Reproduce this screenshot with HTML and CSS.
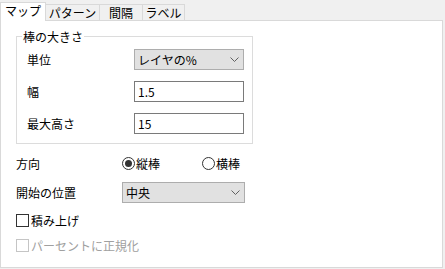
FILE: index.html
```html
<!DOCTYPE html>
<html lang="ja">
<head>
    <meta charset="UTF-8">
    <meta name="viewport" content="width=device-width, initial-scale=1.0">
    <title>マップ</title>
    <link rel="stylesheet" href="styles.css">
</head>
<body>

<div class="window">
    <div class="tabs">
        <div class="tab active tab-map">マップ</div>
        <div class="tab tab-pattern">パターン</div>
        <div class="tab tab-gap">間隔</div>
        <div class="tab tab-label">ラベル</div>
    </div>

    <div class="panel">
        <fieldset class="group">
            <legend>棒の大きさ</legend>
            <div class="group-grid">
                <span class="field-label">単位</span>
                <div class="combo">
                    <span>レイヤの%</span>
                    <svg class="chevron" width="9" height="5" viewBox="0 0 9 5"><path d="M0.5 0.5 L4.5 4.5 L8.5 0.5" fill="none" stroke="#606060"/></svg>
                </div>

                <span class="field-label">幅</span>
                <div class="textbox">1.5</div>

                <span class="field-label">最大高さ</span>
                <div class="textbox">15</div>
            </div>
        </fieldset>

        <div class="row row-direction">
            <span class="row-label">方向</span>
            <span class="radio-opt">
                <span class="radio checked"><span class="dot"></span></span>縦棒
            </span>
            <span class="radio-opt">
                <span class="radio"></span>横棒
            </span>
        </div>

        <div class="row row-start">
            <span class="row-label">開始の位置</span>
            <div class="combo wide">
                <span>中央</span>
                <svg class="chevron" width="9" height="5" viewBox="0 0 9 5"><path d="M0.5 0.5 L4.5 4.5 L8.5 0.5" fill="none" stroke="#606060"/></svg>
            </div>
        </div>

        <div class="row row-stack">
            <span class="check"><span class="box"></span>積み上げ</span>
        </div>

        <div class="row row-normalize">
            <span class="check disabled"><span class="box"></span>パーセントに正規化</span>
        </div>
    </div>
</div>

</body>
</html>
```

FILE: styles.css
```css
body {
    margin: 0;
    background-color: #f0f0f0;
    font-family: "Noto Sans CJK JP", "Noto Sans", sans-serif;
    font-size: 12px;
    color: #000;
}
.window {
    width: 445px;
    height: 269px;
}

/* tab strip */
.tabs {
    display: flex;
    align-items: flex-end;
    height: 20px;
}
.tab {
    box-sizing: border-box;
    height: 16px;
    border-top: 1px solid #d9d9d9;
    border-right: 1px solid #d9d9d9;
    background-color: #f0f0f0;
    text-align: center;
    line-height: 15px;
}
.tab.active {
    height: 19px;
    margin-bottom: -1px;
    border-left: 1px solid #d9d9d9;
    background-color: #fff;
    line-height: 16px;
    position: relative;
    z-index: 1;
}
.tab-map { width: 46px; }
.tab-pattern { width: 54px; }
.tab-gap { width: 43px; }
.tab-label { width: 42px; }

.panel {
    box-sizing: border-box;
    width: 443px;
    height: 248px;
    border: 1px solid #d9d9d9;
    background-color: #fff;
    padding-left: 15px;
    display: flex;
    flex-direction: column;
    align-items: flex-start;
}

/* group box */
.group {
    box-sizing: border-box;
    width: 237px;
    margin: 9px 0 0 0;
    padding: 6px 0 9px 0;
    border: 1px solid #dcdcdc;
}
.group legend {
    margin-left: 5px;
    padding: 0 1px;
    line-height: 13px;
}
.group-grid {
    display: grid;
    grid-template-columns: 107px 110px;
    row-gap: 11px;
    align-items: center;
    margin-left: 10px;
}

.combo {
    box-sizing: border-box;
    width: 110px;
    height: 21px;
    border: 1px solid #adadad;
    background-color: #e1e1e1;
    display: flex;
    align-items: center;
    justify-content: space-between;
    padding: 0 4px 0 3px;
}
.combo.wide {
    width: 123px;
}
.chevron {
    display: block;
}
.textbox {
    box-sizing: border-box;
    height: 21px;
    border: 1px solid #7a7a7a;
    background-color: #fff;
    padding: 0 3px;
    display: flex;
    align-items: center;
}

/* lower rows */
.row {
    display: flex;
    align-items: center;
    height: 21px;
}
.row-label {
    width: 106px;
}
.row-direction { margin-top: 9px; }
.row-start { margin-top: 8px; }
.row-stack { margin-top: 7px; }
.row-normalize { margin-top: 4px; }

.radio-opt {
    display: flex;
    align-items: center;
    gap: 1px;
    width: 80px;
}
.radio {
    box-sizing: border-box;
    width: 13px;
    height: 13px;
    border: 1px solid #333;
    border-radius: 50%;
    display: flex;
    align-items: center;
    justify-content: center;
}
.radio .dot {
    width: 7px;
    height: 7px;
    border-radius: 50%;
    background-color: #333;
}

.check {
    display: flex;
    align-items: center;
    gap: 2px;
}
.check .box {
    box-sizing: border-box;
    width: 13px;
    height: 13px;
    border: 1px solid #333;
    background-color: #fff;
}
.check.disabled {
    color: #a0a0a0;
}
.check.disabled .box {
    border-color: #c5c5c5;
}
```
